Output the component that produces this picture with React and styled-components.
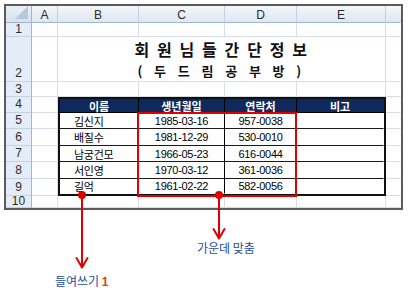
import React from 'react'
import styled, { createGlobalStyle } from 'styled-components'

const GlobalStyle = createGlobalStyle`
  html, body { margin: 0; padding: 0; background: #ffffff; }
  body { font-family: "Noto Sans CJK KR", "Liberation Sans", sans-serif; }
  * { box-sizing: border-box; }
`

const COLS = [26, 26, 81, 86, 72, 89, 15]
const ROWS = [17, 14, 45, 15, 16, 16, 17, 16, 17, 17, 12]
const LETTERS = ['A', 'B', 'C', 'D', 'E', '']

const members = [
  { name: '김신지', birth: '1985-03-16', phone: '957-0038' },
  { name: '배질수', birth: '1981-12-29', phone: '530-0010' },
  { name: '남궁건모', birth: '1966-05-23', phone: '616-0044' },
  { name: '서인영', birth: '1970-03-12', phone: '361-0036' },
  { name: '길억', birth: '1961-02-22', phone: '582-0056' },
]

function App() {
  return (
    <Page>
      <GlobalStyle />
      <Sheet>
        <Corner />
        {LETTERS.map((l, i) => (
          <ColHead key={i} last={i === LETTERS.length - 1}>{l}</ColHead>
        ))}

        {ROWS.slice(1).map((h, r) => {
          const rowNo = r + 1
          const inTable = rowNo >= 4 && rowNo <= 9
          return (
            <React.Fragment key={rowNo}>
              <RowHead align={rowNo === 2 ? 'end' : 'center'}>{rowNo}</RowHead>
              <Cell />
              {rowNo === 2 ? (
                <TitleCell>
                  <Title>회 원 님 들 간 단 정 보</Title>
                  <SubTitle>( 두 드 림 공 부 방 )</SubTitle>
                </TitleCell>
              ) : inTable ? null : (
                <>
                  <Cell />
                  <Cell />
                  <Cell />
                  <Cell />
                </>
              )}
              <Cell last />
            </React.Fragment>
          )
        })}

        <Table>
          <HeadCell>이름</HeadCell>
          <HeadCell>생년월일</HeadCell>
          <HeadCell>연락처</HeadCell>
          <HeadCell last>비고</HeadCell>
          {members.map((m, i) => {
            const bottom = i === members.length - 1
            return (
              <React.Fragment key={m.name}>
                <DataCell bottom={bottom} indent>{m.name}</DataCell>
                <DataCell bottom={bottom} num>{m.birth}</DataCell>
                <DataCell bottom={bottom} num soft>{m.phone}</DataCell>
                <DataCell bottom={bottom} last />
              </React.Fragment>
            )
          })}
        </Table>
      </Sheet>

      <RedBox />
      <Arrows width="408" height="290" viewBox="0 0 408 290">
        <g stroke="#e10000" strokeWidth="2" fill="none" strokeLinecap="round" strokeLinejoin="round">
          <line x1="82" y1="195" x2="82" y2="267" />
          <polyline points="76.5,258 82,267.5 87.5,258" />
          <line x1="219" y1="195" x2="219" y2="238" />
          <polyline points="213.5,229 219,238.5 224.5,229" />
        </g>
        <circle cx="82" cy="195" r="4" fill="#e10000" />
        <circle cx="219" cy="195" r="4" fill="#e10000" />
      </Arrows>

      <Callout x={55} y={273}>들여쓰기 <Num>1</Num></Callout>
      <Callout x={197} y={240}>가운데 맞춤</Callout>
    </Page>
  )
}

export default App

const Page = styled.div`
  position: relative;
  width: 408px;
  height: 290px;
  padding: 4px 0 0 4px;
  overflow: hidden;
`

const Sheet = styled.div`
  display: grid;
  grid-template-columns: ${COLS.map((c) => c + 'px').join(' ')};
  grid-template-rows: ${ROWS.map((r) => r + 'px').join(' ')};
  width: 399px;
  border: 2px solid #5b5b5b;
  background: #ffffff;
`

const Corner = styled.div`
  position: relative;
  background: linear-gradient(#e9eff8, #d7e2f0);
  border-right: 1px solid #9fb5d2;
  border-bottom: 1px solid #9fb5d2;
  &::after {
    content: '';
    position: absolute;
    right: 3px;
    bottom: 3px;
    border-left: 13px solid transparent;
    border-bottom: 13px solid #b7c8de;
  }
`

const ColHead = styled.div`
  display: flex;
  align-items: center;
  justify-content: center;
  background: linear-gradient(#f3f6fb, #dfe7f1);
  border-right: 1px solid ${(p) => (p.last ? 'transparent' : '#c5d2e3')};
  border-bottom: 1px solid #9fb5d2;
  font-family: "Liberation Sans", sans-serif;
  font-size: 12px;
  color: #2b2b2b;
  padding-top: 1px;
`

const RowHead = styled.div`
  display: flex;
  align-items: ${(p) => p.align};
  justify-content: center;
  background: #e4ecf7;
  border-right: 1px solid #9fb5d2;
  border-bottom: 1px solid #c5d2e3;
  font-family: "Liberation Sans", sans-serif;
  font-size: 12px;
  line-height: 13px;
  color: #2b2b2b;
  padding-bottom: ${(p) => (p.align === 'end' ? '1px' : '0')};
`

const Cell = styled.div`
  border-right: 1px solid ${(p) => (p.last ? 'transparent' : '#d6dde8')};
  border-bottom: 1px solid #d6dde8;
`

const TitleCell = styled.div`
  grid-column: 3 / 7;
  display: flex;
  flex-direction: column;
  align-items: center;
  justify-content: flex-end;
  padding-bottom: 1px;
  border-right: 1px solid #d6dde8;
  border-bottom: 1px solid #d6dde8;
  color: #111111;
  font-weight: 700;
`

const Title = styled.div`
  font-size: 16px;
  line-height: 23px;
  letter-spacing: 1.6px;
  word-spacing: 1px;
  white-space: pre;
`

const SubTitle = styled.div`
  font-size: 13px;
  line-height: 19px;
  letter-spacing: 4.4px;
  white-space: pre;
`

const Table = styled.div`
  grid-column: 3 / 7;
  grid-row: 5 / 11;
  display: grid;
  grid-template-columns: 79px 86px 72px 87px;
  grid-template-rows: 14px 16px 17px 16px 17px 15px;
  border: 2px solid #101010;
  background: #ffffff;
`

const HeadCell = styled.div`
  display: flex;
  align-items: center;
  justify-content: center;
  background: #10295c;
  color: #ffffff;
  font-size: 11px;
  font-weight: 700;
  border-right: 1px solid ${(p) => (p.last ? 'transparent' : '#000000')};
  border-bottom: 1px solid #000000;
`

const DataCell = styled.div`
  display: flex;
  align-items: center;
  justify-content: ${(p) => (p.indent ? 'flex-start' : 'center')};
  padding-left: ${(p) => (p.indent ? '14px' : '0')};
  font-family: ${(p) => (p.num ? '"Liberation Sans", sans-serif' : '"Noto Sans CJK KR", sans-serif')};
  font-size: 11px;
  letter-spacing: -0.3px;
  color: #000000;
  border-right: 1px solid ${(p) => (p.last ? 'transparent' : p.soft ? '#3a3a3a' : '#000000')};
  border-bottom: 1px solid ${(p) => (p.bottom ? 'transparent' : '#1a1a1a')};
`

const RedBox = styled.div`
  position: absolute;
  left: 137px;
  top: 112px;
  width: 160px;
  height: 85px;
  border: 2px solid #e10000;
  pointer-events: none;
`

const Arrows = styled.svg`
  position: absolute;
  left: 0;
  top: 0;
  pointer-events: none;
`

const Callout = styled.div`
  position: absolute;
  left: ${(p) => p.x}px;
  top: ${(p) => p.y}px;
  font-size: 12px;
  line-height: 16px;
  color: #1f4d9e;
  white-space: nowrap;
`

const Num = styled.span`
  color: #e23a00;
  font-family: "Liberation Sans", sans-serif;
  font-weight: 700;
`
